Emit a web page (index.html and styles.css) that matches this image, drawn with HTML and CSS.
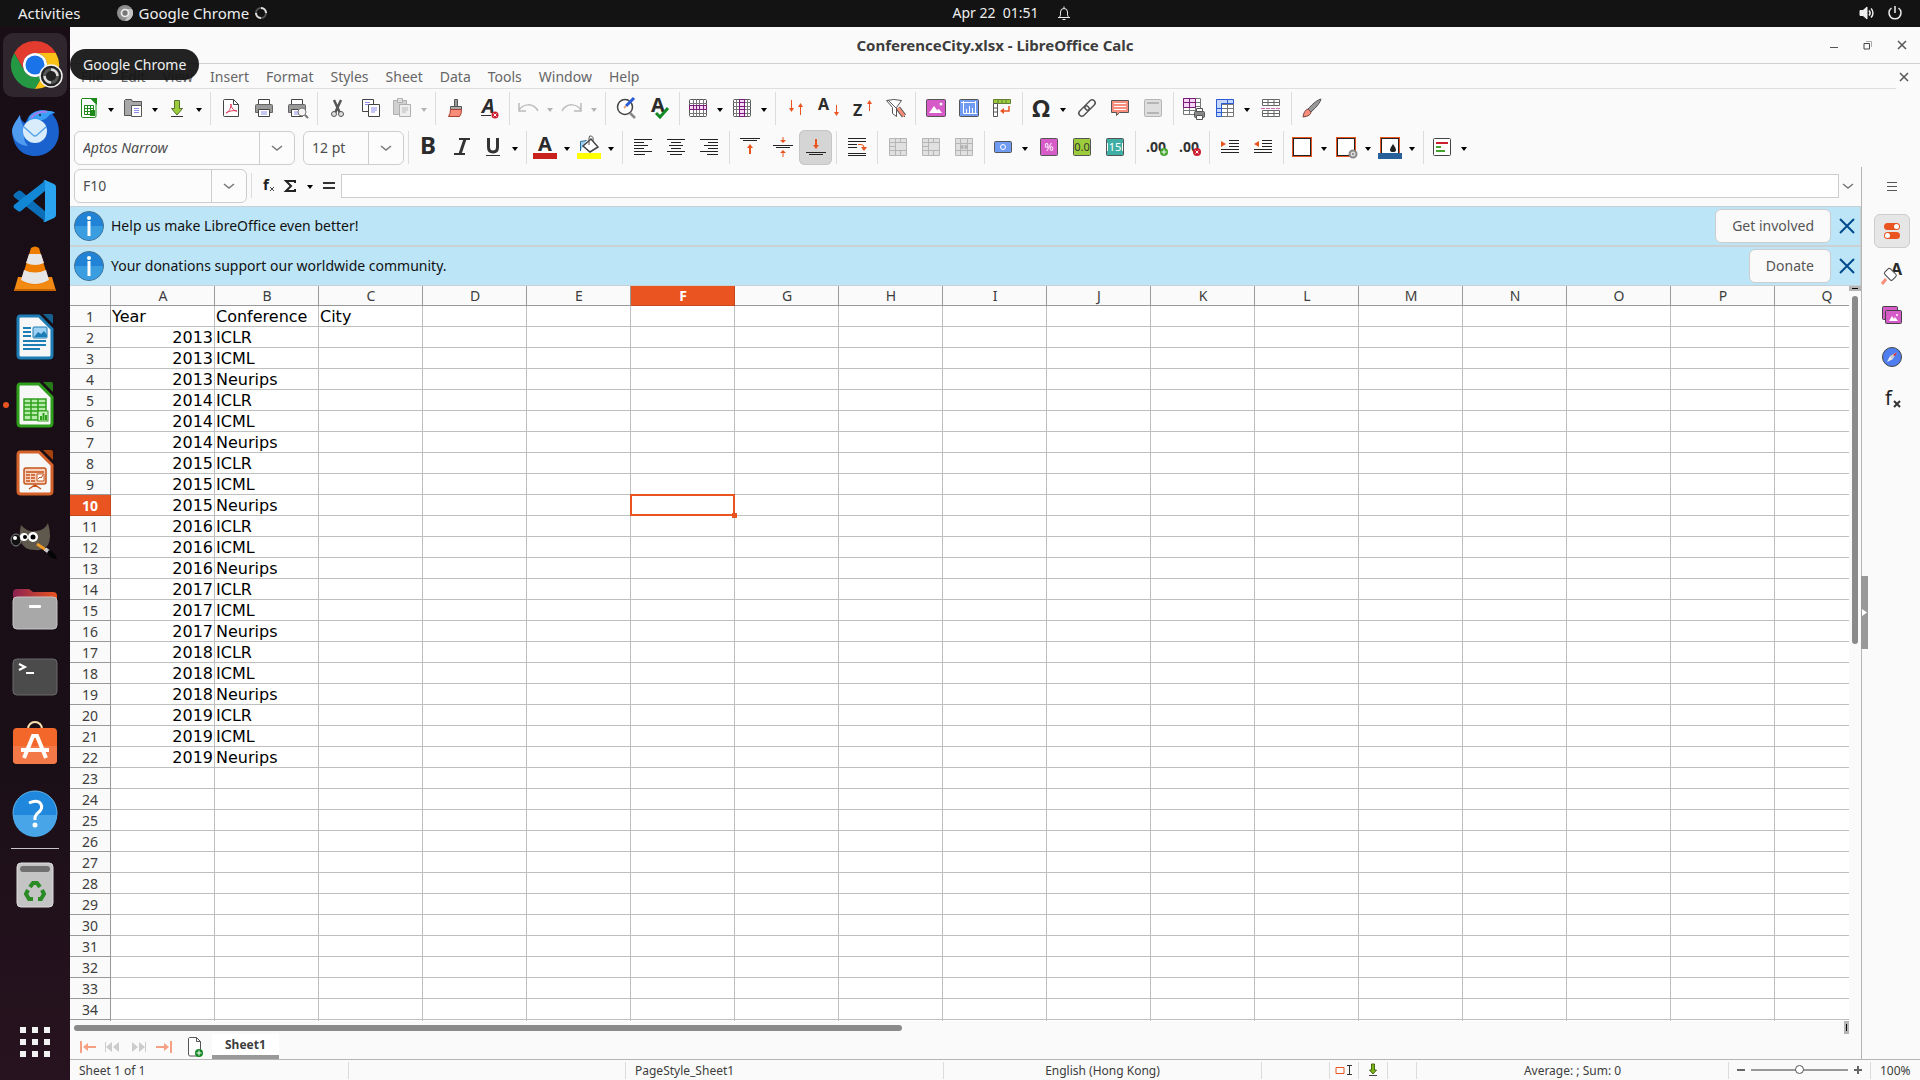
FILE: index.html
```html
<!DOCTYPE html>
<html lang="en">
<head>
  <meta charset="UTF-8" />
  <title>ConferenceCity.xlsx - LibreOffice Calc</title>
  <link rel="stylesheet" href="styles.css">
</head>
<body>
  <!-- top panel -->
  <header class="panel">
    <div class="panel-left">
      <button class="activities">Activities</button>
      <button class="app-menu">
        <svg width="16" height="16" viewBox="0 0 48 48"><circle cx="24" cy="24" r="24" fill="#8f8f8f"/><path d="M24 12H44.800A24 24 0 0 1 24 48L34.400 30z" fill="#c4c4c4"/><circle cx="24" cy="24" r="13" fill="#eee"/><circle cx="24" cy="24" r="8" fill="#777"/></svg>
        Google Chrome
        <svg class="spin" width="12" height="12" viewBox="0 0 12 12" fill="none" stroke-width="2"><circle cx="6" cy="6" r="5" stroke="#555"/><path d="M6 1a5 5 0 0 1 5 5M6 11a5 5 0 0 1-5-5" stroke="#ddd"/></svg>
      </button>
    </div>
    <button class="clock">Apr 22&nbsp; 01:51
      <svg width="14" height="16" viewBox="0 0 14 16" fill="none" stroke="#eee"><path d="M1 12.500h12M2.500 12c1-1 1-2 1-5a3.500 3.500 0 0 1 7 0c0 3 0 4 1 5M5.500 14.500h3M7 1.500v2"/></svg>
    </button>
    <button class="tray" aria-label="System">
      <svg width="16" height="16" viewBox="0 0 16 16" fill="none" stroke="#eee"><path d="M1 5.500h3L8 2v12l-4-3.500H1z" fill="#eee"/><path d="M10 5.500c1.300 1.400 1.300 3.600 0 5M12 3.500c2.600 2.500 2.600 6.500 0 9" stroke-width="1.500"/></svg>
      <svg width="16" height="16" viewBox="0 0 16 16" fill="none" stroke="#eee" stroke-width="1.500"><path d="M4.500 3a6 6 0 1 0 7 0M8 1v7"/></svg>
    </button>
  </header>

  <div class="desktop">
    <!-- launcher -->
    <nav class="dock">
      <button class="dock-item active" aria-label="Google Chrome">
        <svg width="48" height="48" viewBox="0 0 48 48">
          <path fill="#e33b2e" d="M24 12H44.800A24 24 0 0 0 3.200 12L13.600 30A12 12 0 0 1 24 12z"/>
          <path fill="#259844" d="M13.600 30L3.200 12A24 24 0 0 0 24 48L34.400 30A12 12 0 0 1 13.600 30z"/>
          <path fill="#fbc116" d="M34.400 30L24 48A24 24 0 0 0 44.800 12H24A12 12 0 0 1 34.400 30z"/>
          <circle cx="24" cy="24" r="12" fill="#fff"/><circle cx="24" cy="24" r="9.500" fill="#1a73e8"/>
          <circle cx="40" cy="35" r="11" fill="#222" stroke="#f2f2f2" stroke-width="1.500"/>
          <circle cx="40" cy="35" r="6.500" fill="none" stroke="#555" stroke-width="3"/>
          <path d="M40 28.500a6.500 6.500 0 0 1 6.500 6.500M40 41.500a6.500 6.500 0 0 1-6.500-6.500" fill="none" stroke="#ddd" stroke-width="2.500"/>
        </svg>
      </button>
      <button class="dock-item" aria-label="Thunderbird">
        <svg width="48" height="48" viewBox="0 0 48 48">
          <path fill="#1a63cf" d="M1 22C2 15 6 11 9 6c0 4 2 6 5 8l4-7c4-5 11-7 18-5 4 0 6 0 8 2-2 0-3 1-2 2 6 7 7 16 5 24-3 10-12 17-23 17C11 47 2 38 1 22z"/>
          <path fill="#3ba0f5" d="M18 8c4-6 12-8 20-6 3 0 5 1 6 2-6 0-6 4-10 6-5 2-8 2-12 5-3-1-6-2-4-7z"/>
          <path fill="#4f9bf0" d="M1 22C2 15 6 11 9 6c0 9 5 10 5 16 0 5-3 8 3 15C7 36 2 31 1 22z"/>
          <path fill="none" stroke="#a77bf0" stroke-width="2" d="M20 9c4-5 9-7 16-6"/>
          <circle cx="24" cy="22" r="12" fill="#d9ecfb"/>
          <path fill="none" stroke="#58a5e8" stroke-width="1.500" d="M13 18l9 8q2 2 4 0l9-8"/><circle cx="29" cy="6" r="1" fill="#123"/>
        </svg>
      </button>
      <button class="dock-item" aria-label="Visual Studio Code">
        <svg width="44" height="44" viewBox="0 0 44 44">
          <path fill="#0a6fb8" d="M1 15l4-3q1-1 3 0l25 21v10L1 18q-1-2 0-3z"/>
          <path fill="#1287d6" d="M1 29l4 3q1 1 3 0l25-21V1L1 26q-1 2 0 3z"/>
          <path fill="#2aa4ee" d="M32 1l9 4q2 1 2 3v28q0 2-2 3l-9 4q-1 0-2-1 2 0 2-2V4q0-2-2-2z"/>
        </svg>
      </button>
      <button class="dock-item" aria-label="VLC">
        <svg width="44" height="48" viewBox="0 0 44 48">
          <path fill="#f28a13" d="M5 32h34l4 14H1z"/><path fill="#c96300" d="M1 44h42v2H1z"/>
          <path fill="#ef7d00" d="M18 3q4-3 8 0l10 33q-14 8-28 0z"/>
          <path fill="#e6e6e6" d="M16 9h12l3 9q-9 4-18 0zM11 25q11 5 22 0l3 10q-14 8-28 0z"/>
        </svg>
      </button>
      <button class="dock-item" aria-label="LibreOffice Writer">
        <svg width="38" height="46" viewBox="0 0 38 46"><path d="M4 2h19l13 13v26q0 3-3 3H5q-3 0-3-3V5q0-3 2-3z" fill="#f7f7f7" stroke="#1d7db5" stroke-width="3"/><path d="M27 0h8q2 0 2 2v8z" fill="#14608f"/><path d="M7 14h8M7 18h8M7 22h8M7 27h23M7 31h23M7 35h17" stroke="#1d7db5" stroke-width="2"/><rect x="17" y="13" width="14" height="11" rx="1" fill="#9fd2f2" stroke="#1d7db5"/><path d="M18 23l4-5 3 2 3-3 3 4v2z" fill="#1d7db5"/></svg>
      </button>
      <button class="dock-item running" aria-label="LibreOffice Calc">
        <svg width="38" height="46" viewBox="0 0 38 46"><path d="M4 2h19l13 13v26q0 3-3 3H5q-3 0-3-3V5q0-3 2-3z" fill="#f7f7f7" stroke="#2f9e1c" stroke-width="3"/><path d="M27 0h8q2 0 2 2v8z" fill="#277a1a"/><path d="M8 17h22v21H8zM8 21h22M8 25h22M8 29h22M8 33h22M15 17v21M22 17v21" fill="#b7ecab" stroke="#2f9e1c" stroke-width="1.500"/><rect x="22" y="29" width="10" height="10" fill="#c9f3bf" stroke="#2f9e1c"/><path d="M25 38v-4M27.500 38v-7M30 38v-5" stroke="#2f9e1c" stroke-width="2"/></svg>
      </button>
      <button class="dock-item" aria-label="LibreOffice Impress">
        <svg width="38" height="46" viewBox="0 0 38 46"><path d="M4 2h19l13 13v26q0 3-3 3H5q-3 0-3-3V5q0-3 2-3z" fill="#f7f7f7" stroke="#d4622a" stroke-width="3"/><path d="M27 0h8q2 0 2 2v8z" fill="#a5420e"/><rect x="8" y="18" width="22" height="16" rx="2" fill="#f8d2bc" stroke="#c4541c" stroke-width="1.500"/><path d="M10 22h18M10 25h4M10 28h4M10 31h4M15 25h4M15 28h4M15 31h4M19 34v3M13 39l6-4 6 4" stroke="#c4541c" stroke-width="1.500" fill="none"/><path d="M21 24h7v7h-7zM22 29l2-2 1 1 2-3" fill="#fff" stroke="#c4541c"/></svg>
      </button>
      <button class="dock-item" aria-label="GIMP">
        <svg width="48" height="40" viewBox="0 0 48 40"><path d="M10 4q7 8 15 6Q34 9 37 2q4 14 0 22-5 6-13 5-12 0-15-10-1-6 1-15z" fill="#5f584c"/><ellipse cx="5" cy="19" rx="5" ry="6" fill="#111" stroke="#888"/><circle cx="4" cy="17" r="2" fill="#fff"/><circle cx="13" cy="16" r="4" fill="#fff"/><circle cx="22" cy="16" r="5" fill="#fff"/><circle cx="14" cy="16" r="2"/><circle cx="22" cy="16" r="2.500"/><path d="M26 23l9 6" stroke="#f09b2a" stroke-width="3"/><path d="M34 28l4 3" stroke="#ccc" stroke-width="4"/><path d="M38 29q6 2 8 9-7 0-10-6z" fill="#050505"/></svg>
      </button>
      <button class="dock-item" aria-label="Files">
        <svg width="46" height="42" viewBox="0 0 46 42"><defs><linearGradient id="fold"><stop offset="0" stop-color="#8b2252"/><stop offset="1" stop-color="#e95420"/></linearGradient></defs><path d="M1 5q0-4 4-4h12l4 3h20q4 0 4 4v12H1z" fill="url(#fold)"/><rect x="1" y="9" width="44" height="32" rx="4" fill="#a8a8a8" stroke="#c4c4c4"/><rect x="17" y="17" width="12" height="3" rx="1" fill="#fff"/></svg>
      </button>
      <button class="dock-item" aria-label="Terminal">
        <svg width="46" height="38" viewBox="0 0 46 38"><rect x="1" y="1" width="44" height="36" rx="4" fill="#4b4b4b" stroke="#6b6b6b"/><path d="M7 6l6 3-6 3M14 15h8" fill="none" stroke="#fff" stroke-width="2"/></svg>
      </button>
      <button class="dock-item" aria-label="Ubuntu Software">
        <svg width="46" height="48" viewBox="0 0 46 48"><path d="M16 8a7 7 0 0 1 14 0" fill="none" stroke="#fbe0b0" stroke-width="2"/><rect x="1" y="7" width="44" height="36" rx="4" fill="#f4672a"/><path d="M1 25h44v14q0 4-4 4H5q-4 0-4-4z" fill="#f37a48"/><path d="M12 37l9-22h4l9 22M9 29h28" fill="none" stroke="#fff" stroke-width="4"/></svg>
      </button>
      <button class="dock-item" aria-label="Help">
        <svg width="46" height="46" viewBox="0 0 46 46"><circle cx="23" cy="23" r="22" fill="#2088dc" stroke="#64b5ee"/><path d="M1 25h44a22 22 0 0 1-44 0z" fill="#48a5e8"/><path d="M17 13q6-3 10-1 5 4 1 9-4 3-5 6v3" fill="none" stroke="#fff" stroke-width="3"/><circle cx="23" cy="35" r="2.500" fill="#fff"/></svg>
      </button>
      <hr class="dock-line">
      <button class="dock-item" aria-label="Trash">
        <svg width="38" height="46" viewBox="0 0 38 46"><rect x="1" y="1" width="36" height="44" rx="4" fill="#c4c4c4" stroke="#ddd"/><rect x="4" y="4" width="30" height="6" rx="3" fill="#707070"/><path d="M14 25l3-4h4l3 4M26 28l2 4-3 5h-3M17 37h-4l-3-5 2-4" fill="none" stroke="#2a8a24" stroke-width="4"/></svg>
      </button>
      <button class="apps" aria-label="Show Applications">
        <svg width="30" height="30" viewBox="0 0 30 30" fill="#f2f2f2"><path d="M0 0h6v6H0zM12 0h6v6h-6zM24 0h6v6h-6zM0 12h6v6H0zM12 12h6v6h-6zM24 12h6v6h-6zM0 24h6v6H0zM12 24h6v6h-6zM24 24h6v6h-6z"/></svg>
      </button>
    </nav>

    <main class="window">
      <div class="titlebar">
        <h1>ConferenceCity.xlsx - LibreOffice Calc</h1>
        <div class="win-buttons">
          <button aria-label="Minimize"><svg width="10" height="10" viewBox="0 0 10 10"><path d="M1 7.500h8" stroke="#555"/></svg></button>
          <button aria-label="Restore"><svg width="10" height="10" viewBox="0 0 10 10" fill="none" stroke="#444"><path d="M1 3.500h5.500V9H1z"/><path d="M3 1.500h5.500V7" stroke="#aaa"/></svg></button>
          <button aria-label="Close"><svg width="10" height="10" viewBox="0 0 10 10"><path d="M1 1l8 8M9 1L1 9" stroke="#555" stroke-width="1.500"/></svg></button>
        </div>
      </div>

      <div class="menubar">
        <div class="menus">
          <button>File</button><button>Edit</button><button>View</button><button>Insert</button><button>Format</button><button>Styles</button><button>Sheet</button><button>Data</button><button>Tools</button><button>Window</button><button>Help</button>
        </div>
        <button class="doc-close" aria-label="Close document"><svg width="10" height="10" viewBox="0 0 10 10"><path d="M1 1l8 8M9 1L1 9" stroke="#555" stroke-width="1.500"/></svg></button>
      </div>

      <!-- standard toolbar -->
      <div class="toolbar">
        <button class="tool has-drop" aria-label="New"><svg viewBox="0 0 24 24"><path d="M5 2.500h9l5 5V20q0 1.500-1.500 1.500h-12Q4.500 21.500 4.500 20V4q0-1.500 1-1.500z" fill="#fff" stroke="#1d8a1a"/><path d="M13 2h7v7z" fill="#1d8a1a"/><path d="M7.500 9.500h9v9h-9zM7.500 12.500h9M7.500 15.500h9M10.500 9.500v9M13.500 9.500v9" fill="none" stroke="#1d8a1a"/><path d="M13 14h5v6h-5z" fill="#1d8a1a"/></svg></button><button class="drop" aria-label="New options"></button>
        <button class="tool has-drop" aria-label="Open"><svg viewBox="0 0 24 24"><path d="M3.500 4.500l1-1h6l1 2h9v14h-17z" fill="#a8a8a8" stroke="#555"/><path d="M10.500 9.500h10v11h-10z" fill="#fff" stroke="#555"/><path d="M13 12.500h5M13 14.500h5M13 16.500h5" stroke="#8d8df0"/></svg></button><button class="drop" aria-label="Open options"></button>
        <button class="tool has-drop" aria-label="Save"><svg viewBox="0 0 24 24"><path d="M9.500 4.500h5v8h3L12 19l-5.500-6.500h3z" fill="#9ccc3c" stroke="#55702a"/><path d="M6 20.500h12" stroke="#333"/></svg></button><button class="drop" aria-label="Save options"></button>
        <span class="sep"></span>
        <button class="tool" aria-label="Export as PDF"><svg viewBox="0 0 24 24"><path d="M5.500 3.500h9l5 5v12h-14q-1 0-1-1v-15q0-1 1-1z" fill="#fff" stroke="#444"/><path d="M14.500 3.500v5h5" fill="none" stroke="#444"/><path d="M7 17c3-1 5-5 5-9 0 4 3 7 6 7-4-1-8 0-11 2z" fill="none" stroke="#e03a5a"/></svg></button>
        <button class="tool" aria-label="Print"><svg viewBox="0 0 24 24"><path d="M6.500 3.500h11v5h-11z" fill="#fff" stroke="#444"/><path d="M4.500 8.500h15q1 0 1 1v7h-17v-7q0-1 1-1z" fill="#999" stroke="#666"/><path d="M6.500 13.500h11v7h-11z" fill="#fff" stroke="#444"/><path d="M9 16h6M9 18h6" stroke="#8d8df0"/></svg></button>
        <button class="tool" aria-label="Print preview"><svg viewBox="0 0 24 24"><path d="M6.500 3.500h11v5h-11z" fill="#fff" stroke="#444"/><path d="M4.500 8.500h15q1 0 1 1v7h-17v-7q0-1 1-1z" fill="#999" stroke="#666"/><path d="M6.500 13.500h11v7h-11z" fill="#fff" stroke="#444"/><path d="M9 16h4M9 18h4" stroke="#8d8df0"/><circle cx="17" cy="16" r="4" fill="#f4f4f4" stroke="#777"/><path d="M20 19l3 3" stroke="#777" stroke-width="2"/></svg></button>
        <span class="sep"></span>
        <button class="tool" aria-label="Cut"><svg viewBox="0 0 24 24" fill="none" stroke="#555"><path d="M8 4l6 13M15 4L9 17" stroke-width="2.500"/><circle cx="8" cy="18" r="2.500" fill="#ddd"/><circle cx="15" cy="18" r="2.500" fill="#ddd"/></svg></button>
        <button class="tool" aria-label="Copy"><svg viewBox="0 0 24 24"><path d="M3.500 3.500h11v12h-11z" fill="#fff" stroke="#444"/><path d="M6 6.500h5M6 8.500h3" stroke="#8d8df0"/><path d="M9.500 8.500h11v12h-11z" fill="#fff" stroke="#444"/><path d="M12 12h6M12 14h6M12 16h4" stroke="#8d8df0"/></svg></button>
        <button class="tool has-drop" aria-label="Paste" disabled><svg viewBox="0 0 24 24"><path d="M3.500 4.500h13v14h-13z" fill="#d0d0d0" stroke="#b0b0b0"/><path d="M7.500 2.500h5v4h-5z" fill="#ddd" stroke="#b0b0b0"/><path d="M9.500 8.500h11v12h-11z" fill="#eee" stroke="#b0b0b0"/><path d="M12 12h6M12 14h6M12 16h4" stroke="#bbb"/></svg></button><button class="drop" aria-label="Paste options" disabled></button>
        <span class="sep"></span>
        <button class="tool" aria-label="Clone formatting"><svg viewBox="0 0 24 24"><path d="M10.500 3.500h3v7h-3z" fill="#999" stroke="#555"/><path d="M6.500 10.500h11v3h-11z" fill="#aaa" stroke="#555"/><path d="M6.500 13.500h11q0 5-2 7h-11q2-3 2-7z" fill="#f88d7c" stroke="#a8402f"/></svg></button>
        <button class="tool" aria-label="Clear formatting"><svg viewBox="0 0 24 24"><text x="5" y="17" class="glyph i">A</text><path d="M4 19.500h10" stroke="#333"/><circle cx="18" cy="19" r="3.500" fill="#cb1f2f"/><path d="M16.500 17.500l3 3M19.500 17.500l-3 3" stroke="#fff"/></svg></button>
        <span class="sep"></span>
        <button class="tool has-drop" aria-label="Undo" disabled><svg viewBox="0 0 24 24" fill="none" stroke="#bbb" stroke-width="1.500"><path d="M3 7v8h7M3 14c4-6 14-8 19 1"/></svg></button><button class="drop" aria-label="Undo list" disabled></button>
        <button class="tool has-drop" aria-label="Redo" disabled><svg viewBox="0 0 24 24" fill="none" stroke="#bbb" stroke-width="1.500"><path d="M21 7v8h-7M21 14C17 8 7 6 2 15"/></svg></button><button class="drop" aria-label="Redo list" disabled></button>
        <span class="sep"></span>
        <button class="tool" aria-label="Find and replace"><svg viewBox="0 0 24 24"><circle cx="11" cy="11" r="7.500" fill="#fff" stroke="#444" stroke-width="1.500"/><path d="M16 17l5 5" stroke="#888" stroke-width="2.500"/><path d="M12 10l8-8" stroke="#2a5bd7" stroke-width="3"/><path d="M10 12l2-2" stroke="#f0a070" stroke-width="2"/></svg></button>
        <button class="tool" aria-label="Spelling"><svg viewBox="0 0 24 24"><text x="4" y="16" class="glyph">A</text><path d="M9 17l4 4 8-9" fill="none" stroke="#148a24" stroke-width="3"/></svg></button>
        <span class="sep"></span>
        <button class="tool has-drop" aria-label="Row"><svg viewBox="0 0 24 24"><rect x="3.500" y="3.500" width="17" height="17" rx="1" fill="#fff" stroke="#555"/><path d="M7.500 3v18M10.500 3v18M13.500 3v18M17.500 3v18M3 7.500h18M3 17.500h18" stroke="#777"/><path d="M3.500 9.500h17v4h-17zM7.500 10v4M10.500 10v4M13.500 10v4M17.500 10v4" fill="#f5d5f3" stroke="#7a1a78"/></svg></button><button class="drop" aria-label="Row options"></button>
        <button class="tool has-drop" aria-label="Column"><svg viewBox="0 0 24 24"><rect x="3.500" y="3.500" width="17" height="17" rx="1" fill="#fff" stroke="#555"/><path d="M3 6.500h18M3 10.500h18M3 13.500h18M3 17.500h18M6.500 3v18M17.500 3v18" stroke="#777"/><path d="M9.500 3.500h5v17h-5zM10 6.500h4M10 10.500h4M10 13.500h4M10 17.500h4" fill="#f5d5f3" stroke="#7a1a78"/></svg></button><button class="drop" aria-label="Column options"></button>
        <span class="sep"></span>
        <button class="tool" aria-label="Sort"><svg viewBox="0 0 24 24" class="red"><path d="M7.500 4v10M16.500 9v10" /><path d="M5 12h5l-2.500 4zM14 11h5l-2.500-4z" class="f"/></svg></button>
        <button class="tool" aria-label="Sort ascending"><svg viewBox="0 0 24 24" class="red"><text x="1" y="14" class="glyph s">A</text><path d="M19.500 9v9"/><path d="M17 16h5l-2.500 4z" class="f"/></svg></button>
        <button class="tool" aria-label="Sort descending"><svg viewBox="0 0 24 24" class="red"><text x="3" y="20" class="glyph s">Z</text><path d="M19.500 5v10"/><path d="M17 8h5l-2.500-4z" class="f"/></svg></button>
        <button class="tool" aria-label="AutoFilter"><svg viewBox="0 0 24 24"><path d="M3.500 4.500q7-2 15 0l-5 7v9l-4-3v-6z" fill="#fff" stroke="#555"/><path d="M5 4l17 17" stroke="#555"/><path d="M15 12l6 8" stroke="#555" stroke-width="5"/><path d="M15 12l6 8" stroke="#f88d7c" stroke-width="3"/></svg></button>
        <span class="sep"></span>
        <button class="tool" aria-label="Insert image"><svg viewBox="0 0 24 24"><rect x="2.500" y="3.500" width="19" height="17" rx="1" fill="#d65bc8" stroke="#555"/><path d="M5 17l5-7 3 4 2-1 3 4z" fill="#fff"/><circle cx="17" cy="8" r="1.500" fill="#fff"/></svg></button>
        <button class="tool" aria-label="Insert chart"><svg viewBox="0 0 24 24"><rect x="2.500" y="3.500" width="19" height="17" rx="1" fill="#6f9bf3" stroke="#555"/><path d="M4 6.500h14M6.500 5v12.500H20M18.500 5v12" stroke="#fff" fill="none"/><path d="M9.500 17v-4M12.500 17v-7M15.500 17v-5" stroke="#fff"/></svg></button>
        <button class="tool" aria-label="Pivot table"><svg viewBox="0 0 24 24"><path d="M3.500 3.500h17v4h-17zM8 4v3M12 4v3M16 4v3" fill="#9ccc3c" stroke="#647f35"/><path d="M3.500 7.500h4v13h-4zM4 12h3M4 16h3" fill="#fff" stroke="#555"/><path d="M19 10v5h-7" fill="none" stroke="#e95420" stroke-width="1.500"/><path d="M14 12v6l-4-3z" fill="#e95420"/></svg></button>
        <span class="sep"></span>
        <button class="tool has-drop" aria-label="Special character"><svg viewBox="0 0 24 24"><text x="12" y="21" text-anchor="middle" class="glyph l">Ω</text></svg></button><button class="drop" aria-label="Recent characters"></button>
        <button class="tool" aria-label="Hyperlink"><svg viewBox="0 0 24 24" fill="none" stroke="#555" stroke-width="1.500"><rect x="9" y="6" width="12" height="6" rx="3" transform="rotate(-45 15 9)"/><rect x="3" y="12" width="12" height="6" rx="3" transform="rotate(-45 9 15)"/></svg></button>
        <button class="tool" aria-label="Comment"><svg viewBox="0 0 24 24"><path d="M3.500 4.500h17v12h-9l-3 3v-3h-5z" fill="#f88d7c" stroke="#555"/><path d="M6 7.500h12M6 10.500h12M6 13.500h12" stroke="#fff"/></svg></button>
        <button class="tool" aria-label="Headers and footers" disabled><svg viewBox="0 0 24 24"><rect x="3.500" y="3.500" width="17" height="17" rx="1.500" fill="#dedede" stroke="#b5b5b5"/><path d="M6 7h12M6 17h12" stroke="#b5b5b5" stroke-width="2"/></svg></button>
        <span class="sep"></span>
        <button class="tool" aria-label="Print area"><svg viewBox="0 0 24 24"><path d="M1.500 2.500h17v16h-17zM1 6.500h18M1 10.500h18M1 14.500h18M7.500 2v16M13.500 2v16" fill="#fff" stroke="#777"/><path d="M1.500 2.500h12v9h-12zM1 6.500h13M7.500 2v9" fill="#f5d5f3" stroke="#7a1a78"/><rect x="12.500" y="15.500" width="10" height="6" rx="1" fill="#888" stroke="#555"/><path d="M14.500 12.500h6v3h-6zM14.500 19.500h6v4h-6z" fill="#fff" stroke="#555"/></svg></button>
        <button class="tool has-drop" aria-label="Freeze"><svg viewBox="0 0 24 24"><path d="M3.500 3.500h17v17h-17zM3 8.500h18M3 12.500h18M3 16.500h18M8.500 3v18M14.500 3v18" fill="#fff" stroke="#777"/><path d="M3.500 20.500v-17h17v4h-12v13z" fill="#c5d7fa" stroke="#2a5bd7"/><path d="M3 12.500h6M3 16.500h6M14.500 3v5" stroke="#2a5bd7"/></svg></button><button class="drop" aria-label="Freeze options"></button>
        <button class="tool" aria-label="Split window"><svg viewBox="0 0 24 24"><path d="M3.500 3.500h17v6h-17zM3 6.500h18M9 3v7M15 3v7M3.500 14.500h17v6h-17zM3 17.500h18M9 14v7M15 14v7" fill="#fff" stroke="#666"/><path d="M2 12.500h20" stroke="#d46ab0" stroke-dasharray="4 1"/></svg></button>
        <span class="sep"></span>
        <button class="tool" aria-label="Draw functions"><svg viewBox="0 0 24 24"><path d="M21 3q-1 5-10 13l-3-3Q16 4 21 3z" fill="#999" stroke="#555"/><path d="M8 13l3 3q0 4-8 5 1-7 5-8z" fill="#f88d7c" stroke="#7a4a40"/></svg></button>
      </div>

      <!-- formatting toolbar -->
      <div class="toolbar">
        <div class="combo font-name"><input type="text" value="Aptos Narrow" aria-label="Font name"><button class="chev" aria-label="Font list"><svg width="12" height="8" viewBox="0 0 12 8"><path d="M1 2l5 4 5-4" fill="none" stroke="#777" stroke-width="1.500"/></svg></button></div>
        <div class="combo font-size"><input type="text" value="12 pt" aria-label="Font size"><button class="chev" aria-label="Size list"><svg width="12" height="8" viewBox="0 0 12 8"><path d="M1 2l5 4 5-4" fill="none" stroke="#777" stroke-width="1.500"/></svg></button></div>
        <span class="sep"></span>
        <button class="tool" aria-label="Bold"><svg viewBox="0 0 24 24"><text x="11" y="19" text-anchor="middle" class="glyph l">B</text></svg></button>
        <button class="tool" aria-label="Italic"><svg viewBox="0 0 24 24" stroke="#333" stroke-width="2"><path d="M9 4h11M4 19h11"/><path d="M15 4L10 19" stroke-width="3"/></svg></button>
        <button class="tool has-drop" aria-label="Underline"><svg viewBox="0 0 24 24" fill="none" stroke="#333"><path d="M7.500 3v9q0 5 4.500 5t4.500-5V3" stroke-width="3"/><path d="M5 20.500h14"/></svg></button><button class="drop" aria-label="Underline styles"></button>
        <span class="sep"></span>
        <button class="tool has-drop" aria-label="Font color"><svg viewBox="0 0 24 24"><text x="12" y="16" text-anchor="middle" class="glyph">A</text><path d="M0 18h24v6H0z" fill="#c9211e"/></svg></button><button class="drop" aria-label="Font colors"></button>
        <button class="tool has-drop" aria-label="Highlighting"><svg viewBox="0 0 24 24"><path d="M3.500 16V6.500l6-1" fill="#9fd2f2" stroke="#2a6a90"/><path d="M6 11l8-7 7 8-8 5z" fill="#fff" stroke="#444" stroke-width="1.500"/><path d="M12 10V3q0-3 2.500-2t1.500 5" fill="none" stroke="#555"/><path d="M0 18h24v6H0z" fill="#ff0"/></svg></button><button class="drop" aria-label="Highlight colors"></button>
        <span class="sep"></span>
        <button class="tool" aria-label="Align left"><svg viewBox="0 0 24 24" stroke="#222"><path d="M3 4.500h18M3 7.500h10M3 10.500h14M3 13.500h10M3 16.500h18M3 19.500h11"/></svg></button>
        <button class="tool" aria-label="Align center"><svg viewBox="0 0 24 24" stroke="#222"><path d="M3 4.500h18M7 7.500h10M5 10.500h14M7 13.500h10M3 16.500h18M6 19.500h12"/></svg></button>
        <button class="tool" aria-label="Align right"><svg viewBox="0 0 24 24" stroke="#222"><path d="M3 4.500h18M11 7.500h10M7 10.500h14M11 13.500h10M3 16.500h18M10 19.500h11"/></svg></button>
        <span class="sep"></span>
        <button class="tool" aria-label="Align top"><svg viewBox="0 0 24 24" class="red"><path d="M2 3.500h20M5 5.500h14" class="k"/><path d="M12 11v8" stroke-width="2"/><path d="M9 13h6l-3-4z" class="f"/></svg></button>
        <button class="tool" aria-label="Center vertically"><svg viewBox="0 0 24 24" class="red"><path d="M2 10.500h20M5 12.500h14" class="k"/><path d="M12 2v4M12 17v5"/><path d="M9 5h6l-3 3zM9 18h6l-3-3z" class="f"/></svg></button>
        <button class="tool pressed" aria-label="Align bottom"><svg viewBox="0 0 24 24" class="red"><path d="M2 17.500h20M5 19.500h14" class="k"/><path d="M12 4v8" stroke-width="2"/><path d="M9 10h6l-3 4z" class="f"/></svg></button>
        <span class="sep"></span>
        <button class="tool" aria-label="Wrap text"><svg viewBox="0 0 24 24" class="red"><path d="M3 3.500h18M3 6.500h18M3 9.500h9M3 12.500h9M3 18.500h18M3 20.500h18" class="k"/><path d="M13 9.500h3q3 0 3 3"/><path d="M16 12h6l-3 4z" class="f"/></svg></button>
        <span class="sep"></span>
        <button class="tool" aria-label="Merge and center" disabled><svg viewBox="0 0 24 24" stroke="#b5b5b5" fill="#e0e0e0"><path d="M3.500 3.500h17v17h-17zM9.500 3v17M3 7.500h17M3 11.500h6M3 15.500h17M14.500 3v4M14.500 16v4"/></svg></button>
        <button class="tool" aria-label="Merge cells" disabled><svg viewBox="0 0 24 24" stroke="#b5b5b5" fill="#e0e0e0"><path d="M3.500 3.500h17v17h-17zM9.500 3v17M3 7.500h17M3 11.500h6M3 15.500h17M14.500 3v4M14.500 16v4"/></svg></button>
        <button class="tool" aria-label="Unmerge cells" disabled><svg viewBox="0 0 24 24" stroke="#b5b5b5" fill="#e0e0e0"><path d="M3.500 3.500h17v17h-17zM3 8.500h17M3 15.500h17M8.500 3v17M15.500 3v17"/><path d="M8 12l3-2v4zM16 12l-3-2v4z" fill="#aaa"/></svg></button>
        <span class="sep"></span>
        <button class="tool has-drop" aria-label="Currency"><svg viewBox="0 0 24 24"><rect x="3.500" y="6.500" width="17" height="11" rx="1" fill="#6f9bf3" stroke="#555"/><circle cx="12" cy="12" r="2.500" fill="none" stroke="#fff"/></svg></button><button class="drop" aria-label="Currencies"></button>
        <button class="tool" aria-label="Percent"><svg viewBox="0 0 24 24"><rect x="3.500" y="3.500" width="17" height="17" rx="1" fill="#d65bc8" stroke="#555"/><text x="12" y="16" text-anchor="middle" class="num w">%</text></svg></button>
        <button class="tool" aria-label="Number"><svg viewBox="0 0 24 24"><rect x="3.500" y="3.500" width="17" height="17" rx="1" fill="#9ccc3c" stroke="#555"/><text x="12" y="16" text-anchor="middle" class="num">0.0</text></svg></button>
        <button class="tool" aria-label="Date"><svg viewBox="0 0 24 24"><rect x="3.500" y="3.500" width="17" height="17" rx="1" fill="#3fafa5" stroke="#555"/><text x="12" y="16" text-anchor="middle" class="num w">15</text><path d="M4.500 8v8M19.500 8v8" stroke="#fff"/></svg></button>
        <span class="sep"></span>
        <button class="tool" aria-label="Add decimal place"><svg viewBox="0 0 24 24"><text x="2" y="17" class="num b">.00</text><circle cx="20" cy="17" r="4" fill="#43a52e"/><path d="M17.500 17h5M20 14.500v5" stroke="#fff"/></svg></button>
        <button class="tool" aria-label="Delete decimal place"><svg viewBox="0 0 24 24"><text x="2" y="17" class="num b">.00</text><circle cx="20" cy="17" r="4" fill="#cb1f2f"/><path d="M18.500 15.500l3 3M21.500 15.500l-3 3" stroke="#fff"/></svg></button>
        <span class="sep"></span>
        <button class="tool" aria-label="Increase indent"><svg viewBox="0 0 24 24"><path d="M11 5.500h10M11 8.500h10M11 11.500h10M3 14.500h18M3 17.500h18" stroke="#222"/><path d="M3 6v6l5-3z" fill="#e95420"/></svg></button>
        <button class="tool" aria-label="Decrease indent"><svg viewBox="0 0 24 24"><path d="M11 5.500h10M11 8.500h10M11 11.500h10M3 14.500h18M3 17.500h18" stroke="#222"/><path d="M8 6v6L3 9z" fill="#e95420"/></svg></button>
        <span class="sep"></span>
        <button class="tool has-drop" aria-label="Borders"><svg viewBox="0 0 24 24"><rect x="2.500" y="2.500" width="19" height="19" fill="#fff" stroke="#e95420"/><rect x="3.500" y="3.500" width="17" height="17" fill="none" stroke="#222"/></svg></button><button class="drop" aria-label="Border presets"></button>
        <button class="tool has-drop" aria-label="Border style"><svg viewBox="0 0 24 24"><rect x="2.500" y="2.500" width="19" height="19" fill="#fff" stroke="#e95420"/><rect x="3.500" y="3.500" width="17" height="17" fill="none" stroke="#222"/><circle cx="19" cy="19" r="3.500" fill="#ddd" stroke="#888" stroke-width="2"/><circle cx="19" cy="19" r="1" fill="#777"/></svg></button><button class="drop" aria-label="Border styles"></button>
        <button class="tool has-drop" aria-label="Border color"><svg viewBox="0 0 24 24"><rect x="2.500" y="2.500" width="19" height="19" fill="#fff" stroke="#e95420"/><rect x="3.500" y="3.500" width="17" height="17" fill="none" stroke="#222"/><path d="M15 9q6 8 0 8t0-8z" fill="#222"/><path d="M0 18h24v6H0z" fill="#2a6099"/></svg></button><button class="drop" aria-label="Border colors"></button>
        <span class="sep"></span>
        <button class="tool has-drop" aria-label="Conditional formatting"><svg viewBox="0 0 24 24"><rect x="3.500" y="3.500" width="17" height="17" rx="1" fill="#fff" stroke="#444"/><path d="M6 8h12" stroke="#cb1f2f" stroke-width="2"/><path d="M6 12h5M6 16h9" stroke="#43a52e" stroke-width="2"/></svg></button><button class="drop" aria-label="Conditions"></button>
      </div>

      <div class="work">
        <div class="document">
          <div class="formula-bar">
            <div class="combo name-box"><input type="text" value="F10" aria-label="Name box"><button class="chev" aria-label="Named ranges"><svg width="12" height="8" viewBox="0 0 12 8"><path d="M1 2l5 4 5-4" fill="none" stroke="#777" stroke-width="1.500"/></svg></button></div>
            <span class="sep"></span>
            <button class="fx" aria-label="Function wizard"><svg width="14" height="20" viewBox="0 0 14 20"><text x="2" y="14" class="fx-f">f</text><path d="M9 11l4 4M13 11l-4 4" stroke="#444"/></svg></button>
            <button class="fx" aria-label="Sum"><svg width="14" height="20" viewBox="0 0 14 20"><path d="M13 7V5H4l5 5-5 5h9v-2" fill="none" stroke="#222" stroke-width="2"/></svg></button>
            <button class="drop" aria-label="Select function"></button>
            <button class="fx eq" aria-label="Formula"><svg width="14" height="20" viewBox="0 0 14 20"><path d="M1 7h12M1 12h12" stroke="#333" stroke-width="2"/></svg></button>
            <input class="formula" type="text" aria-label="Formula input">
            <button class="expand" aria-label="Expand formula bar"><svg width="12" height="8" viewBox="0 0 12 8"><path d="M1 2l5 4 5-4" fill="none" stroke="#777" stroke-width="1.500"/></svg></button>
          </div>

          <div class="infobar">
            <svg class="info" width="30" height="30" viewBox="0 0 30 30"><circle cx="15" cy="15" r="14.500" fill="#2183d6" stroke="#44708f"/><path d="M1 15h28a14 14 0 0 1-28 0z" fill="#3a9de0"/><path d="M15 10v15" stroke="#fff" stroke-width="3"/><circle cx="15" cy="7" r="2" fill="#fff"/></svg>
            <p>Help us make LibreOffice even better!</p>
            <button class="push">Get involved</button>
            <button class="dismiss" aria-label="Close infobar"><svg width="16" height="16" viewBox="0 0 16 16"><path d="M1 1l14 14M15 1L1 15" stroke="#004b8d" stroke-width="2"/></svg></button>
          </div>
          <div class="infobar">
            <svg class="info" width="30" height="30" viewBox="0 0 30 30"><circle cx="15" cy="15" r="14.500" fill="#2183d6" stroke="#44708f"/><path d="M1 15h28a14 14 0 0 1-28 0z" fill="#3a9de0"/><path d="M15 10v15" stroke="#fff" stroke-width="3"/><circle cx="15" cy="7" r="2" fill="#fff"/></svg>
            <p>Your donations support our worldwide community.</p>
            <button class="push">Donate</button>
            <button class="dismiss" aria-label="Close infobar"><svg width="16" height="16" viewBox="0 0 16 16"><path d="M1 1l14 14M15 1L1 15" stroke="#004b8d" stroke-width="2"/></svg></button>
          </div>

          <div class="sheet-area">
            <div class="sheet-view">
              <table class="sheet">
                <colgroup id="cols"><col class="col-head"></colgroup>
                <thead><tr id="head"><td></td></tr></thead>
                <tbody id="rows"></tbody>
              </table>
            </div>
            <div class="vscroll"><div class="split-h"></div><div class="vtrack"><div class="vthumb"></div></div></div>
          </div>
          <div class="hscroll"><div class="htrack"><div class="hthumb"></div></div><div class="split-v"></div></div>

          <div class="tabs">
            <button class="nav" aria-label="First sheet"><svg width="18" height="14" viewBox="0 0 18 14"><path d="M3 1v12M7 7h11" stroke="#f5a083" stroke-width="2"/><path d="M5 7l5-4v8z" fill="#f5a083"/></svg></button>
            <button class="nav" aria-label="Previous sheet"><svg width="18" height="14" viewBox="0 0 18 14" fill="#ccc"><path d="M1 2h1v10H1zM2 7l6-5v10zM9 7l6-5v10z"/></svg></button>
            <button class="nav" aria-label="Next sheet"><svg width="18" height="14" viewBox="0 0 18 14" fill="#ccc"><path d="M15 2h1v10h-1zM15 7L9 2v10zM8 7L2 2v10z"/></svg></button>
            <button class="nav" aria-label="Last sheet"><svg width="18" height="14" viewBox="0 0 18 14"><path d="M15 1v12M0 7h11" stroke="#f5a083" stroke-width="2"/><path d="M13 7L8 3v8z" fill="#f5a083"/></svg></button>
            <button class="nav add" aria-label="Add sheet"><svg width="18" height="22" viewBox="0 0 18 22"><path d="M3.500 1.500h7l4 4V20h-11q-1-1-1-2V3q0-1 1-1.500zM10.500 1.500v4h4" fill="#fff" stroke="#555"/><circle cx="13" cy="17" r="4" fill="#148a24"/><path d="M10.500 17h5M13 14.500v5" stroke="#fff"/></svg></button>
            <button class="tab">Sheet1</button>
          </div>
        </div>

        <aside class="sidebar">
          <button class="grip" aria-label="Hide sidebar"><svg width="5" height="7" viewBox="0 0 5 7"><path d="M0 0l5 3.500L0 7z" fill="#fff"/></svg></button>
          <button class="side settings" aria-label="Sidebar settings"><svg width="24" height="24" viewBox="0 0 24 24"><path d="M7 7.500h10M7 11.500h10M7 15.500h10" stroke="#555"/></svg></button>
          <button class="side on" aria-label="Properties"><svg width="24" height="24" viewBox="0 0 24 24"><rect x="4" y="4" width="16" height="7" rx="3.500" fill="#e95420"/><circle cx="16.500" cy="7.500" r="2.500" fill="#fff"/><rect x="4" y="13" width="16" height="7" rx="3.500" fill="#e95420"/><circle cx="7.500" cy="16.500" r="2.500" fill="#fff"/></svg></button>
          <button class="side" aria-label="Styles"><svg width="24" height="24" viewBox="0 0 24 24"><text x="11" y="14" class="glyph s">A</text><rect x="5" y="9" width="11" height="8" rx="2" fill="#fff" stroke="#444" transform="rotate(45 10 13)"/><path d="M6 18l-4 5" stroke="#f88d7c" stroke-width="3"/></svg></button>
          <button class="side" aria-label="Gallery"><svg width="24" height="24" viewBox="0 0 24 24"><rect x="2.500" y="3.500" width="15" height="13" rx="1" fill="#d65bc8" stroke="#444"/><rect x="5.500" y="7.500" width="16" height="13" rx="1" fill="#d65bc8" stroke="#444"/><path d="M9 18l3-5 2 3 1-2 3 4z" fill="#fff"/><circle cx="17" cy="12" r="1" fill="#fff"/></svg></button>
          <button class="side" aria-label="Navigator"><svg width="24" height="24" viewBox="0 0 24 24"><circle cx="12" cy="12" r="9.500" fill="#4f7ef0" stroke="#444"/><path d="M7 17l3-6 3 3z" fill="#eee"/><path d="M10 11l7-4-4 7z" fill="#ccc"/><path d="M13 10l4-3-2 4z" fill="#e02030"/></svg></button>
          <button class="side" aria-label="Functions"><svg width="24" height="24" viewBox="0 0 24 24"><text x="5" y="18" class="fx-f big">f</text><path d="M14 14l6 6M20 14l-6 6" stroke="#333" stroke-width="2"/></svg></button>
        </aside>
      </div>

      <footer class="status">
        <div class="cell">Sheet 1 of 1</div>
        <div class="cell"></div>
        <div class="cell">PageStyle_Sheet1</div>
        <div class="cell mid">English (Hong Kong)</div>
        <div class="cell"></div>
        <div class="cell mid"><svg width="18" height="12" viewBox="0 0 18 12" fill="none"><path d="M1 3.500h8v6H1z" stroke="#e95420"/><path d="M12 1.500h5M12 10.500h5M14.500 2v8" stroke="#333"/></svg></div>
        <div class="cell mid"><svg width="10" height="14" viewBox="0 0 10 14"><path d="M3.500 1h3v6h2L5 11 1.500 7h2z" fill="#7cb518" stroke="#456a10"/><path d="M1 12.500h8" stroke="#444"/></svg></div>
        <div class="cell"></div>
        <div class="cell mid">Average: ; Sum: 0</div>
        <div class="cell zoom">
          <button aria-label="Zoom out"><svg width="8" height="8" viewBox="0 0 8 8"><path d="M0 4h8" stroke="#666" stroke-width="2"/></svg></button>
          <input type="range" aria-label="Zoom" min="0" max="100" value="50">
          <button aria-label="Zoom in"><svg width="8" height="8" viewBox="0 0 8 8"><path d="M0 4h8M4 0v8" stroke="#666" stroke-width="2"/></svg></button>
        </div>
        <div class="cell pct">100%</div>
      </footer>
      <div class="tip">Google Chrome</div>
    </main>
  </div>

  <script>
    const letters = 'ABCDEFGHIJKLMNOPQ'.split('');
    const confs = ['ICLR', 'ICML', 'Neurips'];
    const data = [['Year', 'Conference', 'City']];
    for (let y = 2013; y <= 2019; y++) confs.forEach(c => data.push([y, c]));

    letters.forEach(l => {
      document.getElementById('cols').appendChild(document.createElement('col'));
      const th = document.createElement('th');
      th.textContent = l;
      if (l === 'F') th.className = 'sel';
      document.getElementById('head').appendChild(th);
    });
    for (let r = 1; r <= 35; r++) {
      const tr = document.createElement('tr');
      const th = document.createElement('th');
      // the last row only peeks out under the view
      if (r < 35) th.textContent = r;
      if (r === 10) th.className = 'sel';
      tr.appendChild(th);
      letters.forEach((l, i) => {
        const td = document.createElement('td');
        const v = (data[r - 1] || [])[i];
        if (v !== undefined) td.textContent = v;
        if (typeof v === 'number') td.className = 'number';
        if (r === 10 && l === 'F') td.className = 'cursor';
        tr.appendChild(td);
      });
      document.getElementById('rows').appendChild(tr);
    }
  </script>
</body>
</html>
```
FILE: styles.css
```css
* {
  box-sizing: border-box;
}
html, body {
  margin: 0;
  padding: 0;
}
body {
  height: 100vh;
  display: flex;
  flex-direction: column;
  overflow: hidden;
  font-family: "Noto Sans", sans-serif;
  font-size: 14px;
  color: #3d3d3d;
}
button, input {
  font: inherit;
  color: inherit;
  margin: 0;
  padding: 0;
  border: 0;
  background: none;
}
svg {
  display: block;
  flex: none;
  overflow: visible;
}

/* top panel */
.panel {
  height: 27px;
  flex: none;
  display: grid;
  grid-template-columns: 1fr auto 1fr;
  align-items: center;
  padding: 0 17px 2px 16px;
  background: #131313;
  color: #eee;
}
.panel button {
  display: flex;
  align-items: center;
}
.panel-left {
  display: flex;
  gap: 36px;
  padding-left: 2px;
  font-size: 15px;
}
.app-menu {
  gap: 6px;
}
.clock {
  gap: 18px;
  padding-left: 104px;
}
.tray {
  gap: 12px;
  justify-self: end;
}

.desktop {
  flex: 1;
  display: flex;
  min-height: 0;
}

/* launcher */
.dock {
  width: 70px;
  flex: none;
  display: flex;
  flex-direction: column;
  align-items: center;
  gap: 4px;
  padding: 6px 0;
  background: linear-gradient(#1a0e16, #1b0f17 70%, #27131f);
}
.dock-item {
  width: 64px;
  height: 64px;
  flex: none;
  display: flex;
  align-items: center;
  justify-content: center;
  border-radius: 10px;
  position: relative;
}
.dock-item.active {
  background: #30262d;
}
.running::before {
  content: "";
  position: absolute;
  left: 0;
  width: 6px;
  height: 6px;
  border-radius: 50%;
  background: #e95420;
}
.dock-line {
  width: 48px;
  height: 1px;
  margin: -1px 0 0;
  border: 0;
  background: #c8c4c7;
}
.apps {
  margin-top: auto;
  padding-bottom: 17px;
}

/* window */
.window {
  flex: 1;
  min-width: 0;
  display: flex;
  flex-direction: column;
  position: relative;
  background: #fafafa;
}
.titlebar {
  height: 37px;
  flex: none;
  display: grid;
  grid-template-columns: 1fr auto 1fr;
  align-items: center;
  border-bottom: 1px solid #cfcfcf;
}
.titlebar h1 {
  grid-column: 2;
  margin: 0;
  font-size: 15px;
  font-weight: bold;
}
.win-buttons {
  justify-self: end;
  display: flex;
  gap: 24px;
  padding-right: 13px;
}
.menubar {
  height: 25px;
  flex: none;
  display: flex;
}
.menus {
  flex: 1;
  display: flex;
  gap: 17px;
  padding-left: 11px;
  border-bottom: 1px solid #dedede;
  color: #666;
}
.doc-close {
  width: 24px;
  padding-left: 3px;
}

/* toolbars */
.toolbar {
  height: 39px;
  flex: none;
  display: flex;
  align-items: center;
  padding-left: 4px;
}
.tool {
  width: 33px;
  height: 35px;
  flex: none;
  padding: 5px 4px 6px 5px;
}
.tool.has-drop {
  width: 30px;
  padding: 5px 3px 6px 3px;
}
.tool svg {
  width: 24px;
  height: 24px;
}
.tool.pressed {
  background: #d5d5d5;
  border-radius: 6px;
  box-shadow: inset 0 0 0 1px #c6c6c6;
}
.drop {
  width: 14px;
  height: 35px;
  flex: none;
  display: flex;
  align-items: center;
  justify-content: center;
  padding-top: 2px;
}
.drop::before {
  content: "";
  border: 3px solid transparent;
  border-top: 4px solid #000;
  border-bottom: 0;
}
.drop:disabled::before {
  border-top-color: #b5b5b5;
}
.sep {
  width: 1px;
  height: 33px;
  flex: none;
  margin: 0 3px 0 4px;
  background: #dcdcdc;
}
.glyph {
  font: bold 20px "Noto Sans", sans-serif;
  fill: #2b2b2b;
  stroke: none;
}
.glyph.i { font-style: italic; }
.glyph.s { font-size: 16px; }
.glyph.l { font-size: 24px; }
.num {
  font: 11px "Noto Sans", sans-serif;
  fill: #333;
}
.num.w { fill: #fff; }
.num.b {
  font-size: 14px;
  font-weight: bold;
}
.red {
  stroke: #e95420;
  fill: none;
}
.red .f {
  fill: #e95420;
  stroke: none;
}
.red .k {
  stroke: #222;
}

.combo {
  height: 34px;
  flex: none;
  display: flex;
  border: 1px solid #cdcdcd;
  border-radius: 6px;
  background: #fcfcfc;
  overflow: hidden;
  color: #4d4d4d;
}
.combo input {
  flex: 1;
  min-width: 0;
  padding-left: 8px;
}
.chev {
  width: 35px;
  display: flex;
  align-items: center;
  justify-content: center;
  border-left: 1px solid #cdcdcd;
}
.font-name {
  width: 221px;
  margin-right: 8px;
  font-style: italic;
}
.font-size {
  width: 101px;
}

/* document and sidebar */
.work {
  flex: 1;
  display: flex;
  min-height: 0;
}
.document {
  flex: 1;
  min-width: 0;
  display: flex;
  flex-direction: column;
}
.formula-bar {
  height: 39px;
  flex: none;
  display: flex;
  align-items: center;
  padding: 0 0 2px 4px;
}
.name-box {
  width: 173px;
}
.formula-bar .sep {
  height: 25px;
  margin-right: 9px;
}
.fx {
  width: 21px;
}
.fx.eq {
  width: 19px;
  margin-left: 5px;
}
.fx-f {
  font: bold 15px "Noto Sans", sans-serif;
  fill: #222;
}
.fx-f.big {
  font-size: 20px;
  font-weight: normal;
}
.formula {
  flex: 1;
  height: 24px;
  border: 1px solid #cdcdcd;
  background: #fff;
}
.expand {
  width: 22px;
  padding-left: 3px;
}

.infobar {
  height: 40px;
  flex: none;
  display: flex;
  align-items: center;
  padding: 0 5px 0 4px;
  border: 1px solid #cbd0d3;
  border-left: 0;
  background: #bce5f7;
  color: #111;
}
.infobar p {
  flex: 1;
  margin: 0;
  padding: 0 0 2px 7px;
}
.push {
  height: 34px;
  padding: 0 16px 2px;
  border: 1px solid #cdcdcd;
  border-radius: 6px;
  background: #fafafa;
  color: #555;
}
.dismiss {
  margin-left: 8px;
}

/* sheet */
.sheet-area {
  flex: 1;
  display: flex;
  min-height: 0;
}
.sheet-view {
  flex: 1;
  min-width: 0;
  overflow: hidden;
  background: #fff;
}
.sheet {
  table-layout: fixed;
  width: 0;
  border-collapse: separate;
  border-spacing: 0;
}
.sheet col { width: 104px; }
.sheet .col-head { width: 41px; }
.sheet th, .sheet td {
  height: 21px;
  padding: 2px 1px 0;
  border-right: 1px solid #bfbfbf;
  border-bottom: 1px solid #bfbfbf;
  line-height: 18px;
  white-space: nowrap;
}
.sheet td {
  font-family: "DejaVu Sans", sans-serif;
  font-size: 16px;
  color: #000;
}
.sheet th, .sheet thead td {
  border-color: #999;
  background: #fafafa;
  font-weight: normal;
  text-align: center;
}
.sheet thead th, .sheet thead td {
  height: 20px;
  padding: 0 0 0 1px;
  line-height: 19px;
}
.sheet .sel {
  background: #e95420;
  border-color: #c5471b;
  color: #fff;
  font-weight: bold;
}
.sheet .number {
  text-align: right;
}
.cursor {
  position: relative;
}
.cursor::before {
  content: "";
  position: absolute;
  inset: -1px;
  border: 2px solid #e95420;
}
.cursor::after {
  content: "";
  position: absolute;
  right: -3px;
  bottom: -3px;
  width: 5px;
  height: 5px;
  background: #e95420;
}

.vscroll {
  width: 12px;
  flex: none;
  display: flex;
  flex-direction: column;
}
.split-h {
  height: 5px;
  border: solid #b5b5b5;
  border-width: 2px 3px;
  background: #000;
}
.vtrack {
  flex: 1;
  padding: 5px 3px 0;
}
.vthumb {
  height: 48%;
  border-radius: 3px;
  background: #8a8a8a;
}
.hscroll {
  height: 13px;
  flex: none;
  display: flex;
  padding-right: 12px;
}
.htrack {
  flex: 1;
  padding: 4px 0 0 4px;
}
.hthumb {
  width: calc(47% - 4px);
  height: 6px;
  border-radius: 3px;
  background: #8a8a8a;
}
.split-v {
  width: 5px;
  border: solid #b5b5b5;
  border-width: 3px 2px;
  background: #000;
}

.tabs {
  height: 25px;
  flex: none;
  display: flex;
  align-items: center;
  gap: 8px;
  padding-left: 8px;
}
.nav.add {
  margin-left: 4px;
}
.tab {
  align-self: stretch;
  padding: 0 13px;
  border-bottom: 4px solid #999;
  background: #fff;
  font-size: 12px;
  font-weight: bold;
}

.sidebar {
  width: 59px;
  flex: none;
  display: flex;
  flex-direction: column;
  align-items: center;
  gap: 8px;
  padding: 3px 0 0 2px;
  border-left: 1px solid #b5b5b5;
  position: relative;
}
.side {
  width: 36px;
  height: 34px;
  display: flex;
  align-items: center;
  justify-content: center;
}
.side.settings {
  margin-bottom: 2px;
}
.side.on {
  border: 1px solid #cdcdcd;
  border-radius: 6px;
  background: #e6e6e6;
}
.grip {
  position: absolute;
  left: -1px;
  top: 50%;
  width: 7px;
  height: 73px;
  margin-top: -37px;
  padding-left: 1px;
  background: #999;
}

/* status bar */
.status {
  height: 21px;
  flex: none;
  display: grid;
  grid-template-columns: 279fr 277fr 318fr 318fr 68fr 29fr 29fr 29fr 312fr 142fr 49fr;
  align-items: center;
  border-top: 1px solid #b5b5b5;
  font-size: 12px;
}
.cell {
  height: 17px;
  min-width: 0;
  display: flex;
  align-items: center;
  padding-left: 9px;
  border-right: 1px solid #dcdcdc;
  white-space: nowrap;
}
.cell.mid {
  justify-content: center;
  padding: 0;
}
.cell.zoom {
  gap: 6px;
  justify-content: center;
  padding: 0;
}
.cell.pct {
  border: 0;
}
.zoom input {
  width: 97px;
  height: 12px;
  appearance: none;
}
.zoom input::-webkit-slider-runnable-track {
  height: 2px;
  background: #999;
}
.zoom input::-webkit-slider-thumb {
  appearance: none;
  width: 9px;
  height: 9px;
  margin-top: -4px;
  border: 1px solid #555;
  border-radius: 50%;
  background: #fff;
}

.tip {
  position: absolute;
  left: 0;
  top: 22px;
  padding: 6px 13px;
  border-radius: 16px;
  background: rgba(20, 20, 20, 0.94);
  color: #f2f2f2;
  line-height: 19px;
}
```
